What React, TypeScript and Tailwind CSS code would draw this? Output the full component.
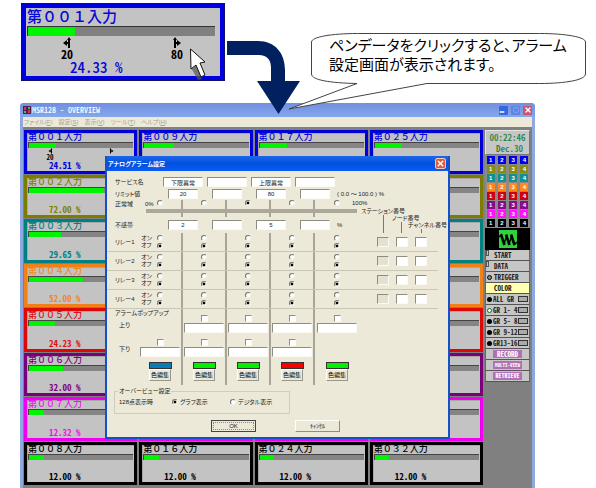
import clsx from 'clsx';
import { Minus, Square, X } from 'lucide-react';
import type { ReactNode } from 'react';

type Tone = { frame: string; text: string; chip: string };

const tones: Tone[] = [
  { frame: 'border-[#0000d8]', text: 'text-[#0000e0]', chip: 'bg-[#0000e8]' },
  { frame: 'border-[#7c7c00]', text: 'text-[#808000]', chip: 'bg-[#8a8a10]' },
  { frame: 'border-[#008080]', text: 'text-[#008080]', chip: 'bg-[#109090]' },
  { frame: 'border-[#f08018]', text: 'text-[#f08820]', chip: 'bg-[#ff8818]' },
  { frame: 'border-[#dc0808]', text: 'text-[#e01010]', chip: 'bg-[#cc0010]' },
  { frame: 'border-[#780078]', text: 'text-[#800080]', chip: 'bg-[#880c88]' },
  { frame: 'border-[#f000f0]', text: 'text-[#f010f0]', chip: 'bg-[#ff10ff]' },
  { frame: 'border-black', text: 'text-black', chip: 'bg-black' },
];

type Pen = { title?: string; value?: string; level: number; limits?: boolean };

// one row per colour group, four pens in each
const pens: Pen[][] = [
  [
    { title: '第００１入力', value: '24.51 %', level: 26, limits: true },
    { title: '第００９入力', level: 29 },
    { title: '第０１７入力', level: 26 },
    { title: '第０２５入力', level: 26 },
  ],
  [{ title: '第００２入力', value: '72.00 %', level: 72 }, { level: 0 }, { level: 0 }, { level: 0 }],
  [{ title: '第００３入力', value: '29.65 %', level: 31 }, { level: 0 }, { level: 0 }, { level: 0 }],
  [{ title: '第００４入力', value: '52.00 %', level: 52 }, { level: 0 }, { level: 0 }, { level: 0 }],
  [{ title: '第００５入力', value: '24.23 %', level: 25 }, { level: 0 }, { level: 0 }, { level: 0 }],
  [{ title: '第００６入力', value: '32.00 %', level: 33 }, { level: 0 }, { level: 0 }, { level: 0 }],
  [{ title: '第００７入力', value: '12.32 %', level: 14 }, { level: 0 }, { level: 0 }, { level: 0 }],
  [
    { title: '第００８入力', value: '12.00 %', level: 14 },
    { title: '第０１６入力', value: '12.00 %', level: 14 },
    { title: '第０２４入力', value: '12.00 %', level: 14 },
    { title: '第０３２入力', value: '12.00 %', level: 14 },
  ],
];

const menus = [
  ['ファイル', 'F'],
  ['設定', 'S'],
  ['表示', 'V'],
  ['ツール', 'T'],
  ['ヘルプ', 'H'],
];

const groups = ['ALL GR', 'GR 1- 4', 'GR 5- 8', 'GR 9-12', 'GR13-16'];
const columns = [0, 1, 2, 3, 4];
const swatches = ['bg-[#0a7cb8]', 'bg-[#00f000]', 'bg-[#00f000]', 'bg-[#f80000]', 'bg-[#00f000]'];

const sunken = 'border border-[#fbfaf4] border-t-[#8f8c80] border-l-[#8f8c80]';
// half-width forms, as on the recorder's own display
const halfWidth = "font-['Noto_Sans_CJK_JP',monospace] [font-feature-settings:'hwid']";

function LimitMark({ flip, className }: { flip?: boolean; className: string }) {
  return (
    <svg viewBox="0 0 8 12" className={clsx(className, flip && '-scale-x-100')}>
      <path d="M5 1.5h2V11H5zM4 3l2-3 2 3zM0 6l4-3v2h2v2H4v2z" />
    </svg>
  );
}

function PenTile({ pen, tone }: { pen: Pen; tone: Tone }) {
  return (
    <section
      className={clsx(
        'flex min-h-0 min-w-0 flex-col border-[3px] bg-[#c3c3c3] px-px leading-none shadow-[inset_1px_1px_0_#a8a8a8]',
        tone.frame,
        tone.text,
      )}
    >
      <h2 className="h-[9px] text-[9px] leading-[9px] font-medium whitespace-nowrap">{pen.title}</h2>
      <div className="h-[6px] border-t border-l border-[#444] bg-[#858585]">
        <div className="h-full bg-[#00f400]" style={{ width: `${pen.level}%` }} />
      </div>
      {pen.limits && (
        <div className="flex gap-[55px] pl-[18px] text-black">
          <div className="flex w-2 flex-col items-center">
            <LimitMark className="h-[6px] w-[5px]" />
            <span className={clsx('text-[7px] leading-[6px] font-bold', halfWidth)}>20</span>
          </div>
          <LimitMark flip className="h-[6px] w-[5px]" />
        </div>
      )}
      {pen.value && (
        <p className={clsx('mt-auto pb-px pl-[21px] text-[9px] leading-[8px] font-bold whitespace-nowrap', halfWidth)}>
          {pen.value}
        </p>
      )}
    </section>
  );
}

function Radio({ name, label, checked }: { name: string; label: string; checked?: boolean }) {
  return (
    <input
      type="radio"
      name={name}
      aria-label={label}
      defaultChecked={checked}
      className="block size-[6px] shrink-0 appearance-none rounded-full border border-[#f4f2e8] border-t-[#77756c] border-l-[#77756c] bg-white checked:bg-[radial-gradient(circle,#000_45%,#fff_60%)]"
    />
  );
}

function Field({ label, value, className }: { label: string; value?: string; className: string }) {
  return (
    <input
      type="text"
      aria-label={label}
      defaultValue={value}
      className={clsx('block h-[10px] min-w-0 p-0 text-center text-[6px] leading-[8px]', sunken, className)}
    />
  );
}

function LimitRow({ label, values, wide, unit }: { label: string; values: string[]; wide?: boolean; unit?: string }) {
  return (
    <div className="flex h-[12px] items-center">
      <span className="w-[54px] shrink-0 pl-2">{label}</span>
      {values.map((value, index) => (
        <div key={index} className="flex w-[44px] shrink-0 justify-center">
          <Field label={`${label} ${index + 1}`} value={value} className={wide ? 'w-[40px] bg-white' : 'w-[30px] bg-white'} />
        </div>
      ))}
      {unit && <span className="whitespace-nowrap">{unit}</span>}
    </div>
  );
}

function RuledCell({ index, className, children }: { index: number; className?: string; children?: ReactNode }) {
  return (
    <div className={clsx('flex w-[44px] shrink-0 flex-col items-center', index < 4 && 'border-r-2 border-[#a9a699]', className)}>
      {children}
    </div>
  );
}

function RelayRow({ number }: { number: number }) {
  return (
    <div className="mr-[10px] flex h-[19px] border-b border-[#c9c6b8]">
      <span className="w-8 shrink-0 self-center pl-2 whitespace-nowrap">リレー{number}</span>
      {columns.map((index) => (
        <RuledCell key={index} index={index} className="relative justify-center gap-[2px]">
          {index === 0 && (
            <div className="absolute top-[2px] left-[2px] leading-[7px]">
              <p>オン</p>
              <p>オフ</p>
            </div>
          )}
          <Radio name={`relay-${number}-${index}`} label={`リレー${number} オン`} />
          <Radio name={`relay-${number}-${index}`} label={`リレー${number} オフ`} checked />
        </RuledCell>
      ))}
      <div className="flex flex-1 items-center gap-[7px] pl-[18px]">
        <Field label="ステーション番号" className="w-[12px] bg-[#e4e1d0]" />
        <Field label="ノード番号" className="w-[12px] bg-white" />
        <Field label="チャンネル番号" className="w-[12px] bg-white" />
      </div>
    </div>
  );
}

function PopupRow({ label, from, to, heading }: { label: string; from: number; to: number; heading?: string }) {
  return (
    <div className="flex h-[24px]">
      <div className="flex w-8 shrink-0 flex-col justify-end gap-[5px] pb-[4px] pl-2 whitespace-nowrap">
        {heading && <p className="leading-[7px]">{heading}</p>}
        <p className="pl-1 leading-[7px]">{label}</p>
      </div>
      {columns.map((index) => (
        <RuledCell key={index} index={index} className="justify-end gap-px">
          {index >= from && index <= to && (
            <>
              <input
                type="checkbox"
                aria-label={`${label} ${index + 1}`}
                className={clsx('block size-[7px] appearance-none bg-white', sunken)}
              />
              <Field label={`${label} ${index + 1}`} className="w-[40px] bg-white" />
            </>
          )}
        </RuledCell>
      ))}
    </div>
  );
}

function AlarmDialog() {
  return (
    <div
      role="dialog"
      aria-labelledby="alarm-title"
      className="absolute top-[53px] left-[82px] w-[345px] border-2 border-t-0 border-[#1450c8] bg-[#ece9d8] text-[6px] leading-[8px] text-[#222] [font-feature-settings:'palt']"
    >
      <header className="flex h-[15px] items-center justify-between bg-linear-to-b from-[#1c66e8] via-[#0050e0] to-[#0a5cf4] pr-[2px] pl-px text-white">
        <h2 id="alarm-title" className="font-bold">
          アナログアラーム設定
        </h2>
        <button type="button" aria-label="閉じる" className="flex size-[11px] items-center justify-center rounded-[2px] border border-[#f4c8b8] bg-[#e25a38]">
          <X className="size-[9px]" strokeWidth={4} />
        </button>
      </header>

      <div className="pt-[5px]">
        <LimitRow label="サービス名" values={['下限異常', '', '上限異常', '']} wide />
        <LimitRow label="リミット値" values={['20', '', '80', '']} unit="( 0.0 ～ 100.0 ) %" />
      </div>

      <div className="relative flex">
        <div className="w-[252px] shrink-0">
          <div className="relative flex h-[17px]">
            <span className="w-8 shrink-0 pl-2 whitespace-nowrap">正常域</span>
            {columns.map((index) => (
              <RuledCell key={index} index={index} className="relative">
                {index === 0 && <span className="absolute top-0 left-[6px]">0%</span>}
                <Radio name="normal-range" label={`正常域 ${index + 1}`} checked={index === 2} />
              </RuledCell>
            ))}
            <div className="absolute right-[2px] bottom-[4px] left-[39px] h-[4px] bg-[#aca899]" />
          </div>
          <div className="py-[2px]">
            <LimitRow label="不感帯" values={['2', '', '5', '']} unit="%" />
          </div>
        </div>
        <div className="flex-1 leading-[7px] whitespace-nowrap">
          <p className="-ml-[7px] h-[8px]">100%</p>
          <p className="pl-[2px]">ステーション番号</p>
          <p className="pl-[33px]">ノード番号</p>
          <p className="pl-[49px]">チャンネル番号</p>
        </div>
        <svg viewBox="0 0 90 36" className="absolute top-0 left-[252px] h-[36px] w-[90px] stroke-[#777]">
          <path d="M24.5 15v18M42.5 22v11M62.5 29v4" />
        </svg>
      </div>

      {[1, 2, 3, 4].map((number) => (
        <RelayRow key={number} number={number} />
      ))}

      <PopupRow label="上り" heading="アラームポップアップ" from={1} to={4} />
      <PopupRow label="下り" from={0} to={3} />
      <div className="flex h-[28px] pl-8">
        {swatches.map((color, index) => (
          <RuledCell key={index} index={index} className="pt-[5px]">
            <div className={clsx('h-[7px] w-[23px] border border-[#333]', color)} />
            <button type="button" className="h-[12px] w-[22px] border border-[#9a978a] border-t-white border-l-white leading-[9px] whitespace-nowrap text-black">
              色編集
            </button>
          </RuledCell>
        ))}
      </div>

      <fieldset className="mt-[2px] mr-[158px] ml-[7px] h-[27px] border border-[#d0cdbf]">
        <legend className="ml-[3px] px-px leading-[8px]">オーバービュー設定</legend>
        <div className="flex items-center pt-[3px] pl-1 whitespace-nowrap">
          <span className="w-[53px]">128点表示時</span>
          <label className="flex w-[58px] items-center gap-[2px]">
            <Radio name="overview" label="グラフ表示" checked />
            グラフ表示
          </label>
          <label className="flex items-center gap-[2px]">
            <Radio name="overview" label="デジタル表示" />
            デジタル表示
          </label>
        </div>
      </fieldset>

      <footer className="mt-[6px] flex gap-[39px] pb-[5px] pl-[104px]">
        <button type="button" className="h-[12px] w-[45px] border border-[#444] p-px leading-[8px]">
          <span className="block border border-dotted border-[#888] leading-[6px]">OK</span>
        </button>
        <button type="button" className="h-[12px] w-[45px] border border-[#8f8c80] border-t-white border-l-white leading-[9px]">
          ｷｬﾝｾﾙ
        </button>
      </footer>
    </div>
  );
}

function SideButton({ children, className }: { children: ReactNode; className?: string }) {
  return (
    <button
      type="button"
      className={clsx(
        'flex h-[11px] w-full items-center border-b border-[#555] text-[7px] leading-[8px] font-bold whitespace-nowrap text-[#222]',
        halfWidth,
        className,
      )}
    >
      {children}
    </button>
  );
}

function SidePanel() {
  return (
    <aside className="w-[45px] shrink-0 leading-none">
      <div
        className={clsx(
          'flex h-[25px] flex-col items-center justify-center border border-[#e4e4e4] border-r-[#777] border-b-[#777] bg-[#c6c6c6] text-[9px] leading-[11px] font-medium text-[#208038]',
          halfWidth,
        )}
      >
        <p>00:22:46</p>
        <p className="pl-1">Dec.30</p>
      </div>
      <div className="grid grid-cols-4 gap-y-px bg-[#8a8a8a] py-px">
        {tones.map((tone) =>
          [1, 2, 3, 4].map((number) => (
            <button
              key={tone.chip + number}
              type="button"
              className={clsx('mx-auto h-[8px] w-[8px] text-[6px] leading-[8px] font-bold text-white', tone.chip)}
            >
              {number}
            </button>
          )),
        )}
      </div>
      <div className="flex h-[22px] items-center justify-center bg-black">
        <svg viewBox="0 0 18 18" className="size-[18px]">
          <path fill="#2fd43c" d="M0 0h18v18H0z" />
          <path fill="none" stroke="#000" strokeWidth="2.6" d="M2 4.500 5.500 15M7 4.500 10.500 15M12 4.500 15.500 15" />
          <path fill="none" stroke="#000" strokeWidth="1.4" d="M0 7 3 4M5 14l3-9M10 14l3-9M15 15l3-3" />
        </svg>
      </div>
      <div className="border-x border-[#666] bg-[#c6c6c6]">
        <SideButton className="gap-[5px]">
          <i className="h-[6px] w-[3px] self-start border border-[#555]" />
          START
        </SideButton>
        <SideButton className="gap-[5px]">
          <i className="h-[6px] w-[3px] self-start border border-[#555]" />
          DATA
        </SideButton>
        <SideButton className="gap-[2px] pl-px">
          <i className="size-[5px] rounded-full border border-black bg-[#888]" />
          TRIGGER
        </SideButton>
        <SideButton className="bg-[#ffffb0] pl-2">COLOR</SideButton>
        {groups.map((group, index) => (
          <SideButton key={group} className="pl-px">
            <i className={clsx('size-[5px] shrink-0 rounded-full', index === 1 ? 'border border-[#0a7020] bg-white' : 'bg-black')} />
            <span className="w-[26px] pl-px text-left whitespace-pre">{group}</span>
            <i className="h-[6px] w-[10px] shrink-0 border border-[#333] bg-[#aaa]" />
          </SideButton>
        ))}
        {['RECORD', 'MULTI-VIEW', 'RETRIEVE'].map((item) => (
          <SideButton key={item} className="justify-center">
            <span
              className={clsx(
                'w-[29px] bg-[#b070b4] text-center text-white',
                item === 'MULTI-VIEW' && 'text-[5px]',
                item === 'RETRIEVE' && 'text-[6px]',
              )}
            >
              {item}
            </span>
          </SideButton>
        ))}
      </div>
    </aside>
  );
}

function OverviewWindow() {
  return (
    <section className="relative mr-[61px] ml-5 flex flex-1 flex-col rounded-t-[4px] border-x-[3px] border-[#8fa8e0] bg-[#808080]">
      <header className="-mx-[3px] flex h-[14px] items-center rounded-t-[4px] bg-linear-to-b from-[#7090e0] to-[#86a6ec] px-[3px] text-white">
        <svg viewBox="0 0 8 8" className="size-[8px]">
          <path fill="#502050" d="M0 0h8v8H0z" />
          <path fill="#e03050" d="M1 1h2v3H1zM5 4h2v3H5z" />
          <path fill="#40c060" d="M5 1h2v2H5zM1 5h2v2H1z" />
        </svg>
        <h1 className={clsx('ml-px flex-1 text-[8px] leading-none font-medium', halfWidth)}>MSR128 - OVERVIEW</h1>
        <div className="flex gap-[3px]">
          <button type="button" aria-label="最小化" className="flex size-[9px] items-end rounded-[1px] bg-[#3468e0]">
            <Minus className="size-[6px]" strokeWidth={6} />
          </button>
          <button type="button" aria-label="最大化" className="flex size-[9px] items-center justify-center rounded-[1px] bg-[#5c86e4] text-[#90acec]">
            <Square className="size-[6px]" strokeWidth={3} />
          </button>
          <button type="button" aria-label="閉じる" className="flex size-[9px] items-center justify-center rounded-[1px] bg-[#cc5470]">
            <X className="size-[8px]" strokeWidth={4} />
          </button>
        </div>
      </header>
      <nav className="flex h-[10px] items-center gap-[6px] bg-[#ece9d8] pl-px text-[6px] leading-none whitespace-nowrap text-[#a5a294] [font-feature-settings:'palt']">
        {menus.map(([label, key]) => (
          <button key={key} type="button">
            {label}(<u>{key}</u>)
          </button>
        ))}
      </nav>
      <div className="flex flex-1 gap-[2px] pt-[3px] pr-[2px] pb-[3px] pl-px">
        <div className="grid flex-1 grid-cols-4 grid-rows-8 gap-x-[2px] gap-y-px">
          {pens.map((row, group) => row.map((pen, index) => <PenTile key={`${group}-${index}`} pen={pen} tone={tones[group]} />))}
        </div>
        <SidePanel />
      </div>
      <AlarmDialog />
    </section>
  );
}

function PenCloseup() {
  return (
    <section className="flex h-[78px] w-[204px] shrink-0 flex-col border-[5px] border-[#0000e0] bg-[#c3c3c3] px-px pt-px text-[#0808d8] outline-1 -outline-offset-1 outline-[#101070]">
      <h2 className="h-[17px] text-[15px] leading-[16px] font-medium">第００１入力</h2>
      <div className="mr-1 h-[10px] border-t border-l border-[#333] bg-[#808080]">
        <div className="h-full w-1/4 bg-[#00f400]" />
      </div>
      <div className={clsx('flex gap-[96px] pt-px pl-[33px] text-[12px] leading-[10px] font-bold text-black', halfWidth)}>
        <div className="flex w-[14px] flex-col items-center">
          <LimitMark className="h-[12px] w-[8px]" />
          20
        </div>
        <div className="flex w-[14px] flex-col items-center">
          <LimitMark flip className="h-[12px] w-[8px]" />
          80
        </div>
      </div>
      <p className={clsx('pl-[43px] text-[15px] leading-[16px] font-medium', halfWidth)}>24.33 %</p>
    </section>
  );
}

export default function App() {
  return (
    <main lang="ja" className="flex min-h-screen flex-col overflow-hidden bg-white font-['Liberation_Sans','Noto_Sans_CJK_JP',sans-serif]">
      <div className="relative z-10 flex h-[103px] pt-[3px] pl-[21px]">
        <PenCloseup />
        <svg viewBox="0 0 596 120" className="pointer-events-none absolute top-0 left-0 h-[120px] w-[596px]">
          <path fill="#002060" d="M227 41h31c17 0 27 12 27 29v11h15l-21.500 33L257 81h14V68c0-8-4-13-12-13h-32z" />
          <path
            fill="#fff"
            stroke="#444"
            d="M357 83.500C330 83 311.500 80 311.500 74V42c0-5 20-8.500 46-8.500h182c26 0 46 3.500 46 8.500v32c0 6-20 9.500-46 9.500H427L289 109z"
          />
          <path fill="#555" opacity=".7" d="m190 66 8 14 4-1-6-14z" />
          <path fill="#fff" stroke="#111" d="m190.500 49 .5 20 5-4 5 12 4-2-5-12 5-1z" />
        </svg>
        <p className="relative mt-[33px] ml-[104px] text-[15px] leading-[19px] whitespace-nowrap text-black [font-feature-settings:'palt']">
          ペンデータをクリックすると、アラーム
          <br />
          設定画面が表示されます。
        </p>
      </div>
      <OverviewWindow />
    </main>
  );
}
